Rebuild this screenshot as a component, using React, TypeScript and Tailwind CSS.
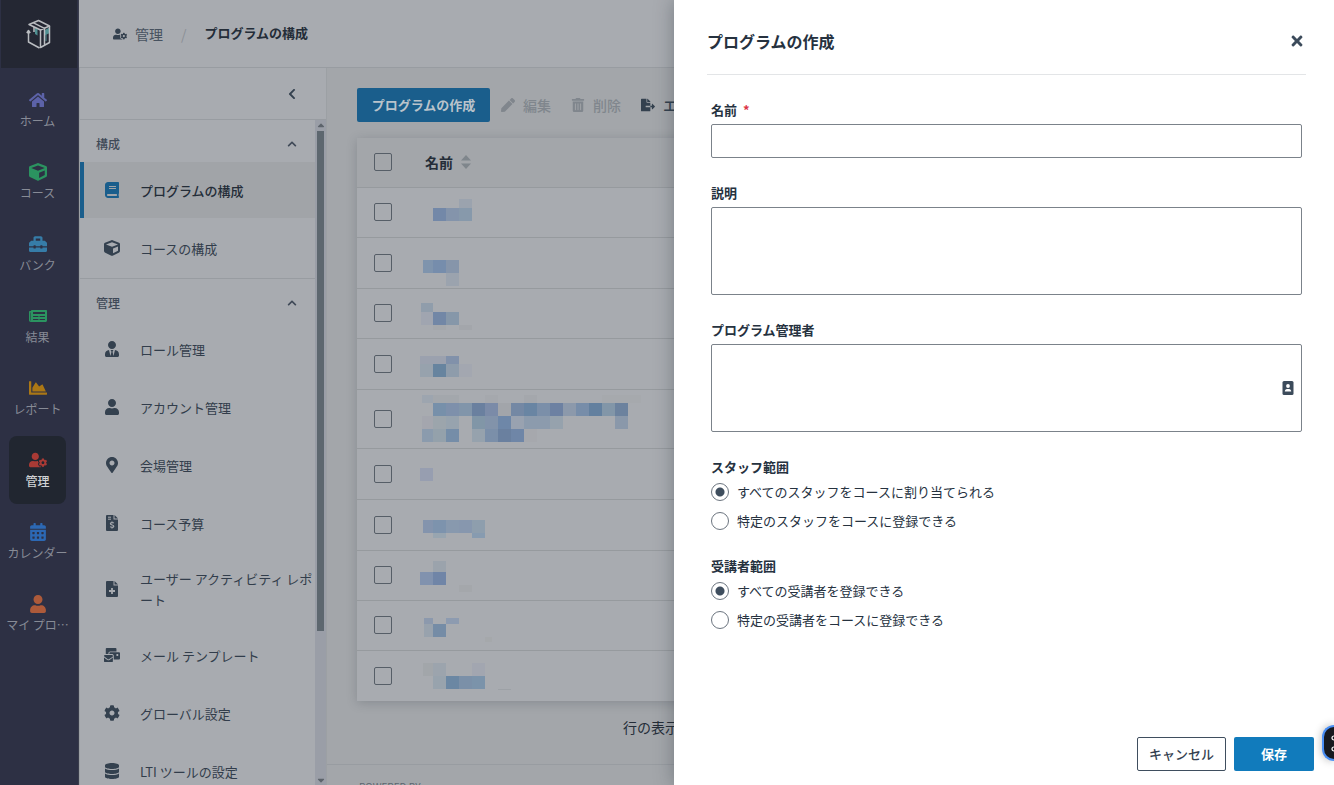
import type { ReactNode } from "react";
import type { IconType } from "react-icons";
import {
  FaHome, FaCube, FaToolbox, FaNewspaper, FaChartArea, FaUserCog, FaCalendarAlt, FaUser, FaBook,
  FaUserTie, FaMapMarkerAlt, FaMailBulk, FaCog, FaDatabase,
  FaChevronLeft, FaChevronUp, FaPen, FaTrashAlt, FaFileExport, FaTimes,
} from "react-icons/fa";
import { FaCaretUp, FaCaretDown } from "react-icons/fa6";

type IconProps = { className?: string };
type AnyIcon = IconType | ((props: IconProps) => ReactNode);
type RailItem = { label: string; Icon: IconType; color: string; active?: boolean };

const rail: RailItem[] = [
  { label: "ホーム", Icon: FaHome, color: "text-[#5c62a8]" },
  { label: "コース", Icon: FaCube, color: "text-[#2b9360]" },
  { label: "バンク", Icon: FaToolbox, color: "text-[#367ca8]" },
  { label: "結果", Icon: FaNewspaper, color: "text-[#2b9360]" },
  { label: "レポート", Icon: FaChartArea, color: "text-[#ab7715]" },
  { label: "管理", Icon: FaUserCog, color: "text-[#a93a35]", active: true },
  { label: "カレンダー", Icon: FaCalendarAlt, color: "text-[#2c68b4]" },
  { label: "マイ プロ…", Icon: FaUser, color: "text-[#ad5a3a]" },
];

function Logo() {
  return (
    <svg viewBox="0 0 40 40" className="size-10" fill="none" strokeWidth="1.5" strokeLinejoin="round" aria-hidden="true">
      <path d="M16 13.500V20L18.500 21.500V15z" fill="#4f9092" />
      <path d="M26 16.500 30.500 14V18.500L26 21z M27 21V27" stroke="#4f9092" fill="#4f9092" strokeWidth="1" />
      <path d="M10 10.500 19.500 6.500 30.500 12 21.500 16Z M14 8.700 25.500 14.300" stroke="#b9bcc0" />
      <path d="M21.500 16V33.500L30.500 28.500V12 M9.500 17V28L20.500 34 M7.800 19 9.500 16.500 11.200 19 M25.500 14.500V31 M15 13V18" stroke="#b9bcc0" />
    </svg>
  );
}

/* Document with a folded corner; the mark sits in the lower half. */
function Sheet({ className, children }: IconProps & { children: ReactNode }) {
  return (
    <svg viewBox="0 0 16 16" className={className} aria-hidden="true">
      <path d="M3 0h6.500v4.500H14V15a1 1 0 0 1-1 1H3a1 1 0 0 1-1-1V1a1 1 0 0 1 1-1z" fill="currentColor" />
      <path d="M10.500 0 14 3.500h-3.500z" fill="currentColor" />
      {children}
    </svg>
  );
}

function SheetDollar({ className }: IconProps) {
  return (
    <Sheet className={className}>
      <path d="M4 2.200h3M4 4.200h3" stroke="#a8abb0" strokeWidth="1" />
      <path d="M9.800 8.200C9.200 7.500 6.400 7.300 6.400 8.800c0 1.600 3.400.8 3.400 2.400 0 1.500-2.900 1.300-3.600.5M8 6.500v1M8 12.500v1" fill="none" stroke="#a8abb0" strokeWidth="1.200" />
    </Sheet>
  );
}

function SheetPlus({ className }: IconProps) {
  return (
    <Sheet className={className}>
      <path d="M8 7v6M5 10h6" stroke="#a8abb0" strokeWidth="1.800" />
    </Sheet>
  );
}

function Rail() {
  return (
    <nav className="flex w-[79px] shrink-0 flex-col border-r border-[#3a3d4c] bg-[#2d3044]">
      <a href="#top" aria-label="トップ" className="mr-px ml-px flex h-[68px] items-center justify-center bg-[#242733]">
        <Logo />
      </a>
      <ul className="flex flex-col gap-1 pt-2 pr-3 pl-[9px]">
        {rail.map(({ label, Icon, color, active }) => (
          <li key={label}>
            <a
              href="#menu"
              className={`flex h-[68px] flex-col items-center justify-center gap-1 rounded-lg text-xs whitespace-nowrap ${active ? "bg-[#212630] font-medium text-[#d0d2d5]" : "text-[#878b96]"}`}
            >
              <Icon className={`size-[18px] ${color}`} />
              <span>{label}</span>
            </a>
          </li>
        ))}
      </ul>
    </nav>
  );
}

function GroupTitle({ children }: { children: ReactNode }) {
  return (
    <button type="button" className="flex h-[42px] w-full items-center justify-between pt-1.5 pr-[18px] pl-4 text-xs font-medium text-[#3f4957]">
      {children}
      <FaChevronUp className="size-2.5" />
    </button>
  );
}

function NavLink({ Icon, active, children }: { Icon: AnyIcon; active?: boolean; children: ReactNode }) {
  return (
    <a
      href="#section"
      className={`mb-0.5 flex min-h-14 items-center gap-5 border-l-4 py-1.5 pl-5 text-[13px] leading-[21px] whitespace-nowrap ${active ? "border-[#1a5e8c] bg-[#a1a4a8] font-medium text-[#242d38]" : "border-transparent text-[#323d4b]"}`}
    >
      <Icon className={`size-4 shrink-0 ${active ? "text-[#1a5e8c]" : "text-[#34414f]"}`} />
      <span>{children}</span>
    </a>
  );
}

function SideMenu() {
  return (
    <aside className="flex min-h-0 w-[248px] shrink-0 flex-col border-x border-[#9ca0a4] bg-[#a8abb0]">
      <div className="flex h-[52px] shrink-0 items-center justify-end border-b border-[#989ca1] pr-7 text-[#34414f]">
        <button type="button" aria-label="メニューを閉じる"><FaChevronLeft className="size-3" /></button>
      </div>
      <div className="flex min-h-0 flex-1">
        <div className="min-w-0 flex-1 overflow-hidden">
          <section className="border-b border-[#989ca1]">
            <GroupTitle>構成</GroupTitle>
            <NavLink Icon={FaBook} active>プログラムの構成</NavLink>
            <NavLink Icon={FaCube}>コースの構成</NavLink>
          </section>
          <section>
            <GroupTitle>管理</GroupTitle>
            <NavLink Icon={FaUserTie}>ロール管理</NavLink>
            <NavLink Icon={FaUser}>アカウント管理</NavLink>
            <NavLink Icon={FaMapMarkerAlt}>会場管理</NavLink>
            <NavLink Icon={SheetDollar}>コース予算</NavLink>
            <div className="py-2"><NavLink Icon={SheetPlus}>ユーザー アクティビティ レポ<br />ート</NavLink></div>
            <NavLink Icon={FaMailBulk}>メール テンプレート</NavLink>
            <NavLink Icon={FaCog}>グローバル設定</NavLink>
            <NavLink Icon={FaDatabase}>LTI ツールの設定</NavLink>
          </section>
        </div>
        <div className="flex w-[11px] flex-col items-center justify-between bg-[#9a9ea7] pt-px text-[#5d646c]" aria-hidden="true">
          <FaCaretUp className="size-2.5 shrink-0" />
          <div className="h-[500px] w-[7px] bg-[#5d676f]" />
          <div className="flex-1" />
          <FaCaretDown className="size-2.5 shrink-0" />
        </div>
      </div>
    </aside>
  );
}

/* Each block is [x, y, width, height, colour] inside the name cell. */
type Block = [number, number, number, number, string];
type Row = { height: string; blocks: Block[] };

const rows: Row[] = [
  { height: "h-[50px]", blocks: [[46, 11, 13, 9, "#9ba3ae"], [20, 20, 13, 13, "#7388a8"], [33, 20, 13, 13, "#8494ab"], [46, 20, 13, 13, "#8799ab"]] },
  { height: "h-[51px]", blocks: [[10, 22, 10, 13, "#7f94ad"], [20, 22, 13, 13, "#768dac"], [33, 22, 13, 13, "#8695aa"], [33, 35, 13, 13, "#9ba3ae"]] },
  { height: "h-[50px]", blocks: [[8, 14, 12, 9, "#909dab"], [8, 23, 12, 13, "#a0a5b0"], [20, 23, 13, 13, "#7287a6"], [33, 23, 13, 13, "#8697a9"], [20, 36, 13, 5, "#a5a8ac"], [46, 36, 13, 5, "#a3a6ab"]] },
  { height: "h-[51px]", blocks: [[7, 17, 13, 8, "#9ba1ae"], [20, 17, 13, 8, "#9ba1ae"], [33, 17, 13, 8, "#8191aa"], [7, 25, 13, 13, "#97a2ad"], [20, 25, 13, 13, "#67849f"], [33, 25, 13, 13, "#8e9cab"], [46, 25, 13, 13, "#a3a7b0"]] },
  { height: "h-[59px]", blocks: [
    [9, 5, 11, 8, "#9da5af"], [20, 5, 26, 8, "#a3a7ac"], [72, 5, 13, 8, "#a5a8ad"], [111, 5, 13, 8, "#a4a7ac"], [189, 5, 39, 8, "#a6a9ad"],
    [20, 13, 13, 13, "#7790aa"], [33, 13, 13, 13, "#7e90ab"], [46, 13, 13, 13, "#8195aa"], [59, 13, 13, 13, "#6a809f"], [72, 13, 13, 13, "#7b8ba8"], [85, 13, 13, 13, "#a2a5aa"], [98, 13, 13, 13, "#7488a4"], [111, 13, 13, 13, "#6985a3"], [124, 13, 13, 13, "#7b8fa9"], [137, 13, 13, 13, "#6d81a2"], [150, 13, 13, 13, "#8c99ab"], [163, 13, 13, 13, "#778da9"], [176, 13, 13, 13, "#63809f"], [189, 13, 13, 13, "#8296a8"], [202, 13, 13, 13, "#6c829e"],
    [9, 26, 11, 13, "#a4a6ae"], [20, 26, 13, 13, "#9ca5ac"], [33, 26, 13, 13, "#97a3ae"], [59, 26, 13, 13, "#8196a7"], [72, 26, 13, 13, "#8293aa"], [85, 26, 13, 13, "#6e87a8"], [98, 26, 13, 13, "#99a2b0"], [111, 26, 26, 13, "#8c9bad"], [137, 26, 13, 13, "#96a2ad"], [202, 26, 13, 13, "#8a98aa"],
    [9, 39, 11, 13, "#8b9bad"], [20, 39, 13, 13, "#94a1ab"], [33, 39, 13, 13, "#758da8"], [59, 39, 13, 13, "#96a2ad"], [72, 39, 13, 13, "#7b8fa9"], [85, 39, 13, 13, "#6a809f"], [98, 39, 13, 13, "#6f86a7"], [111, 39, 13, 13, "#a6a8ad"],
  ] },
  { height: "h-[51px]", blocks: [[7, 19, 13, 13, "#979eb0"]] },
  { height: "h-[51px]", blocks: [[10, 20, 10, 13, "#8494ad"], [20, 20, 13, 13, "#7d93ad"], [33, 20, 13, 13, "#8899ae"], [46, 20, 13, 13, "#8797ae"], [59, 20, 13, 13, "#8e9ead"], [20, 33, 13, 5, "#98a5b0"], [59, 33, 13, 5, "#879bb0"]] },
  { height: "h-[50px]", blocks: [[20, 10, 13, 11, "#9ba3ac"], [7, 21, 13, 13, "#8192ae"], [20, 21, 13, 13, "#7085a7"], [46, 34, 13, 7, "#a4a7ab"]] },
  { height: "h-[50px]", blocks: [[11, 17, 9, 6, "#8c99ad"], [33, 17, 13, 6, "#8d9bb0"], [11, 23, 9, 13, "#98a2ad"], [20, 23, 13, 13, "#758ca6"], [72, 36, 7, 5, "#a5a8ab"]] },
  { height: "h-[51px]", blocks: [[10, 12, 10, 13, "#a2a6aa"], [20, 12, 13, 13, "#9ca4ad"], [59, 12, 13, 13, "#a2a6b0"], [20, 25, 13, 13, "#98a3ad"], [33, 25, 13, 13, "#6b87a3"], [46, 25, 13, 13, "#7b90a8"], [59, 25, 13, 13, "#7b93aa"], [85, 38, 13, 1, "#9da1a6"]] },
];

const box = "block size-[18px] appearance-none rounded-[2px] border border-[#565e67]";

function ProgramTable() {
  return (
    <table className="w-full border-collapse bg-[#a8abb0] text-[#242d38] shadow-[0_2px_10px_rgba(40,50,60,0.22)]">
      <thead className="bg-[#a3a6aa]">
        <tr className="h-[49px] border-b border-[#969a9e]">
          <th className="w-14 pl-[17px]"><input type="checkbox" aria-label="すべて選択" className={box} /></th>
          <th className="pl-3 text-left text-sm font-bold">
            <button type="button" className="flex items-center gap-2">
              名前
              <svg viewBox="0 0 10 14" className="h-3.5 w-2.5 text-[#7f868c]" fill="currentColor" aria-hidden="true"><path d="M0 5.500 5 0l5 5.500zM0 8.500h10L5 14z" /></svg>
            </button>
          </th>
        </tr>
      </thead>
      <tbody>
        {rows.map((row, i) => (
          <tr key={i} className={`${row.height} border-b border-[#969a9e] last:border-b-0`}>
            <td className="w-14 pl-[17px]"><input type="checkbox" aria-label={`行 ${i + 1}`} className={box} /></td>
            <td className="p-0 align-top">
              <svg className="block h-12 w-60" aria-hidden="true" overflow="visible" shapeRendering="crispEdges">
                {row.blocks.map(([x, y, w, h, c], k) => <rect key={k} x={x} y={y} width={w} height={h} fill={c} />)}
              </svg>
            </td>
          </tr>
        ))}
      </tbody>
    </table>
  );
}

function ToolButton({ Icon, dark, children }: { Icon: IconType; dark?: boolean; children: ReactNode }) {
  return (
    <button type="button" className={`flex shrink-0 items-center gap-2 text-sm font-medium ${dark ? "text-[#34414f]" : "text-[#80868d]"}`}>
      <Icon className="size-3.5" />
      {children}
    </button>
  );
}

function MainArea() {
  return (
    <main className="flex min-w-0 flex-1 flex-col overflow-hidden bg-[#a3a6aa]">
      <div className="flex min-h-0 flex-1 flex-col pt-5 pl-[30px]">
        <div className="flex h-[34px] shrink-0 items-center gap-5 whitespace-nowrap">
          <div className="flex items-center gap-[11px]">
            <button type="button" className="h-[34px] w-[133px] rounded-[2px] bg-[#1a5e8c] text-[13px] font-bold text-[#b9c3cb]">プログラムの作成</button>
            <ToolButton Icon={FaPen}>編集</ToolButton>
          </div>
          <ToolButton Icon={FaTrashAlt}>削除</ToolButton>
          <ToolButton Icon={FaFileExport} dark>エクスポート</ToolButton>
        </div>
        <div className="mt-4"><ProgramTable /></div>
        <p className="mt-4 pl-[266px] text-sm whitespace-nowrap text-[#242d38]">行の表示</p>
      </div>
      <footer className="h-[21px] shrink-0 border-t border-[#989ca1] pt-4 pl-8 text-[10px] leading-3 text-[#5d6770]">POWERED BY</footer>
    </main>
  );
}

function Header() {
  return (
    <header className="flex h-[68px] shrink-0 items-center gap-[18px] border-b border-[#989ca1] bg-[#a8abb0] pl-[34px] text-sm">
      <a href="#admin" className="flex items-center gap-2 text-[#47525f]"><FaUserCog className="size-3.5 text-[#34414f]" />管理</a>
      <span className="text-[#8b9096]">/</span>
      <span className="text-[13px] font-bold text-[#242d38]">プログラムの構成</span>
    </header>
  );
}

function Field({ id, label, required, children }: { id: string; label: string; required?: boolean; children: ReactNode }) {
  return (
    <div>
      <label htmlFor={id} className="mb-1 flex gap-1.5 text-[13px] leading-5 font-bold">
        {label}{required && <span className="text-[#dc3545]">*</span>}
      </label>
      {children}
    </div>
  );
}

function RadioGroup({ name, title, options }: { name: string; title: string; options: string[] }) {
  return (
    <fieldset>
      <legend className="text-[13px] leading-5 font-bold">{title}</legend>
      <div className="mt-[5px] flex flex-col gap-[9px]">
        {options.map((o, i) => (
          <label key={o} className="flex items-center gap-2 text-[13px] leading-5">
            <input
              type="radio"
              name={name}
              defaultChecked={i === 0}
              className="size-[18px] shrink-0 appearance-none rounded-full border border-[#6c757f] checked:bg-[radial-gradient(circle,#3f4e5e_4px,transparent_5px)]"
            />
            {o}
          </label>
        ))}
      </div>
    </fieldset>
  );
}

function ContactIcon() {
  return (
    <svg viewBox="0 0 12 14" className="h-3.5 w-3" aria-hidden="true">
      <rect x="0.500" width="11" height="14" rx="1.500" fill="#3c4b5b" />
      <circle cx="6" cy="5" r="1.900" fill="#fff" />
      <path d="M2.800 10.500c0-1.600 1-2.500 2.200-2.500h2c1.200 0 2.200.9 2.200 2.500z" fill="#fff" />
    </svg>
  );
}

const inputBox = "block w-full resize-none rounded-[2px] border border-[#7b828a] bg-white px-3 outline-none";

function Drawer() {
  return (
    <div role="dialog" aria-labelledby="drawer-title" className="absolute inset-y-0 right-0 flex w-[660px] max-w-full flex-col bg-white text-[#26323f] shadow-[0_0_18px_rgba(30,40,50,0.35)]">
      <header className="mr-7 ml-[33px] flex h-[75px] shrink-0 items-center justify-between border-b border-[#e3e5e7] pt-2">
        <h2 id="drawer-title" className="text-base font-bold">プログラムの作成</h2>
        <button type="button" aria-label="閉じる" className="pr-px text-[#3c4b5b]"><FaTimes className="size-4" /></button>
      </header>
      <form className="flex flex-1 flex-col gap-[25px] pt-[25px] pr-8 pl-[37px]">
        <Field id="name" label="名前" required>
          <input id="name" type="text" className={`${inputBox} h-[34px]`} />
        </Field>
        <Field id="desc" label="説明">
          <textarea id="desc" className={`${inputBox} h-[88px]`} />
        </Field>
        <Field id="admins" label="プログラム管理者">
          <div className="relative">
            <textarea id="admins" className={`${inputBox} h-[88px]`} />
            <button type="button" aria-label="管理者を選択" className="absolute inset-y-0 right-2 flex items-center"><ContactIcon /></button>
          </div>
        </Field>
        <RadioGroup name="staff" title="スタッフ範囲" options={["すべてのスタッフをコースに割り当てられる", "特定のスタッフをコースに登録できる"]} />
        <RadioGroup name="learners" title="受講者範囲" options={["すべての受講者を登録できる", "特定の受講者をコースに登録できる"]} />
      </form>
      <footer className="flex shrink-0 justify-end gap-2 pr-5 pb-3.5 text-[13px]">
        <button type="button" className="h-[34px] w-[89px] rounded-[2px] border border-[#3f4e5e] font-medium text-[#34414f]">キャンセル</button>
        <button type="button" className="h-[34px] w-20 rounded-[2px] bg-[#117bbc] font-bold text-white">保存</button>
      </footer>
    </div>
  );
}

function FloatingWidget() {
  return (
    <button type="button" aria-label="ショートカット" className="absolute right-0 bottom-6 h-9 w-3 overflow-hidden rounded-l-xl border-y-2 border-l-2 border-[#4a8ff5] bg-[#17191f] shadow-[0_0_8px_rgba(0,0,0,0.3)]">
      <svg viewBox="0 0 10 32" className="h-8 w-2.5" fill="none" stroke="#fff" strokeWidth="1.200" aria-hidden="true">
        <circle cx="10" cy="11" r="2" /><circle cx="10" cy="22" r="2" />
      </svg>
    </button>
  );
}

export default function App() {
  return (
    <div className="relative flex h-screen overflow-hidden bg-[#a3a6aa] font-['Noto_Sans_CJK_JP',sans-serif]">
      <Rail />
      <div className="flex min-w-0 flex-1 flex-col">
        <Header />
        <div className="flex min-h-0 flex-1">
          <SideMenu />
          <MainArea />
        </div>
      </div>
      <Drawer />
      <FloatingWidget />
    </div>
  );
}
